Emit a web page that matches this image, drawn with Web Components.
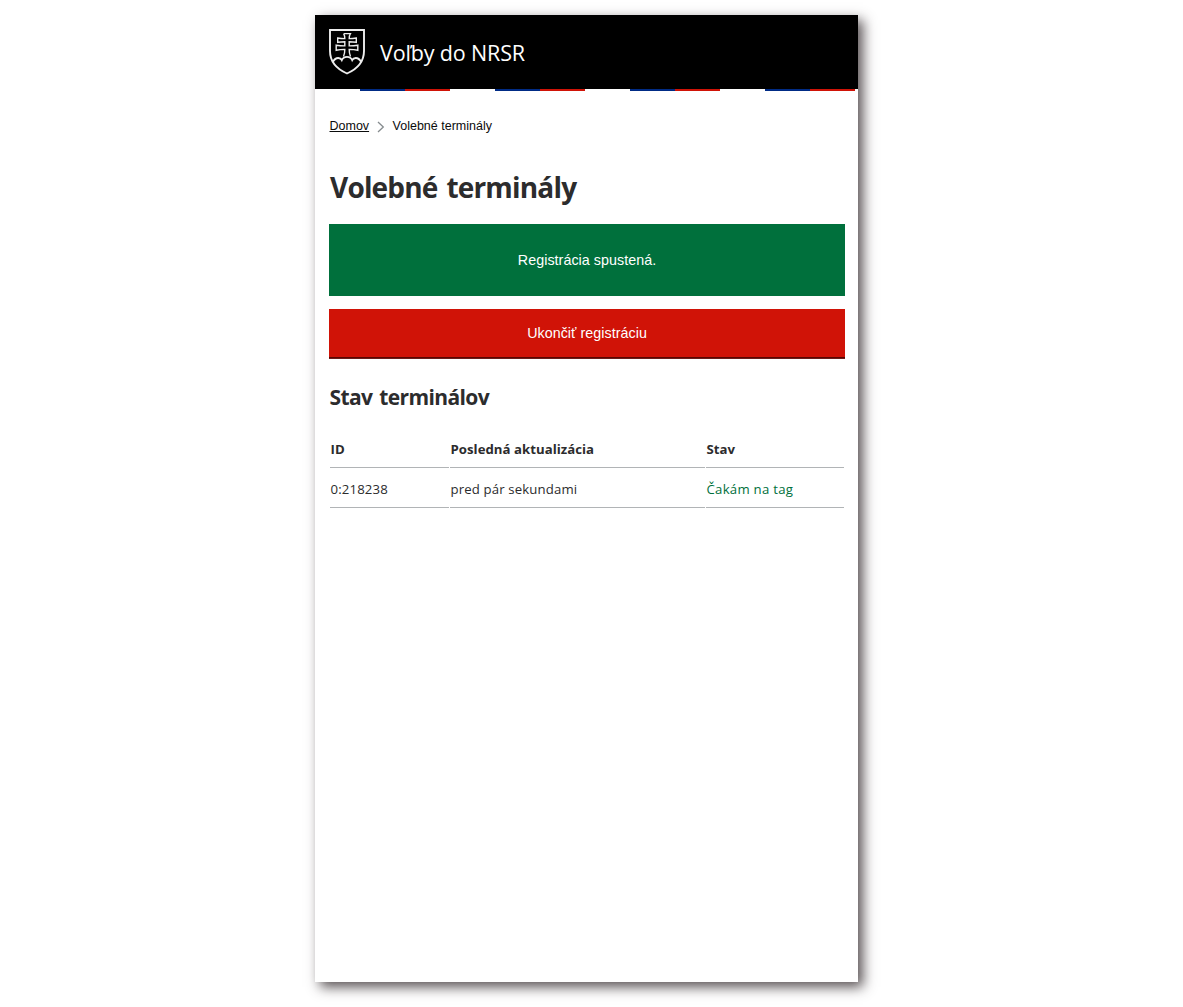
<!DOCTYPE html>
<html lang="sk">
<head>
<meta charset="utf-8">
<title>Voľby do NRSR</title>
<style>
html,body{margin:0;background:#fff}
body{height:1007px;overflow:hidden;font-family:"Open Sans","Noto Sans",sans-serif;color:#2c2c2d}
</style>
</head>
<body>
<app-shell>
  <site-header slot="header">Voľby do NRSR</site-header>
  <bread-crumbs><a slot="home">Domov</a>Volebné terminály</bread-crumbs>
  <page-title>Volebné terminály</page-title>
  <status-banner>Registrácia spustená.</status-banner>
  <action-button>Ukončiť registráciu</action-button>
  <section-title>Stav terminálov</section-title>
  <terminal-table></terminal-table>
</app-shell>
<script>
const define = (name, html) => {
  const template = document.createElement('template');
  template.innerHTML = html;
  customElements.define(name, class extends HTMLElement {
    constructor() {
      super();
      this.attachShadow({mode: 'open'}).append(template.content.cloneNode(true));
    }
  });
};

define('app-shell', `<style>
:host{display:flex;flex-direction:column;box-sizing:border-box;width:543px;height:967px;margin:15px 0 0 315px;background:#fff;box-shadow:5px 5px 12px 0 rgba(46,38,40,.8)}
main{display:flow-root;padding:0 13px 0 14px}
</style><slot name="header"></slot><main><slot></slot></main>`);

define('site-header', `<style>
:host{display:block;color:#fff}
.bar{display:flex;align-items:center;height:74px;padding-left:14px;background:#000;box-sizing:border-box}
svg{display:block;flex:none;margin-top:-1px}
.name{margin-left:15px;font-size:21.5px;line-height:30px;margin-top:1px;white-space:nowrap;letter-spacing:-.15px}
.stripe{height:2px;background:repeating-linear-gradient(90deg,#fff 0 45px,#002b85 45px 90px,#d01307 90px 135px)}
</style>
<div class="bar">
<svg width="36" height="46" viewBox="0 0 36 46" fill="none" stroke="#ededed">
<path stroke-width="1.9" d="M1 1H35V22C35 33.5 27 40.500 18 44.500C9 40.500 1 33.500 1 22Z"/>
<path stroke-width="1.4" d="M14.600 4.600H21.400Q20.200 6.500 20.200 9.600Q24 9.600 27.300 9V13.300Q24 12.700 20.200 12.700V16.900Q25 16.900 28.800 16.200V21.300Q25 20.400 20.200 20.400Q20.200 24.500 21.500 27.600M14.600 4.600Q15.800 6.500 15.800 9.600Q12 9.600 8.700 9V13.300Q12 12.700 15.800 12.700V16.900Q11 16.900 7.200 16.200V21.300Q11 20.400 15.800 20.400Q15.800 24.500 14.500 27.600"/>
<path stroke-width="1.8" d="M3.800 33Q6 29 9.200 29Q11.700 29 12.800 31.200Q14.200 27.800 18 27.800Q21.800 27.800 23.200 31.200Q24.300 29 26.800 29Q30 29 32.200 33"/>
</svg><span class="name"><slot></slot></span></div><div class="stripe"></div>`);

define('bread-crumbs', `<style>
:host{display:flex;align-items:center;height:20px;margin:25px 0 0 .5px;font:12.500px/20px "Liberation Sans",Arial,sans-serif;color:#0b0c0c;white-space:nowrap}
.home{text-decoration:underline;text-underline-offset:1px}
svg{display:block;margin:1px 7.500px 0 8px;flex:none}
</style><span class="home"><slot name="home"></slot></span><svg width="8" height="12" viewBox="0 0 8 12" fill="none" stroke="#858b8e" stroke-width="1.3"><path d="M1 1L6.300 6L1 11"/></svg><span class="here"><slot></slot></span>`);

define('page-title', `<style>
:host{display:block}
h1{margin:31px 0 17px 1px;font-size:28px;line-height:40px;font-weight:700;white-space:nowrap;letter-spacing:-.82px;word-spacing:2.400px}
</style><h1><slot></slot></h1>`);

define('status-banner', `<style>
:host{display:flex;align-items:center;justify-content:center;height:72px;background:#00703c;color:#fff;font:14.300px/20px "Liberation Sans",Arial,sans-serif;letter-spacing:.04px}
</style><span><slot></slot></span>`);

define('action-button', `<style>
:host{display:block;margin-top:13px}
button{display:block;width:100%;height:50px;margin:0;padding:0 0 2px;border:0;background:#d01307;box-shadow:inset 0 -1px #6e1b19,inset 0 -2px #5a0500;color:#fff;font:14.300px/20px "Liberation Sans",Arial,sans-serif;letter-spacing:.04px}
</style><button><slot></slot></button>`);

define('section-title', `<style>
:host{display:block}
h2{margin:23px 0 17px .5px;font-size:21px;line-height:30px;font-weight:700;white-space:nowrap;letter-spacing:-.6px;word-spacing:1.900px}
</style><h2><slot></slot></h2>`);

define('terminal-table', `<style>
:host{display:block;margin-left:1px}
.row{display:grid;grid-template-columns:119px 255px 138px;column-gap:1px;font-size:13.200px;line-height:20px;white-space:nowrap}
.row>*{box-sizing:border-box;height:39px;min-width:0;padding:10px 0 0 .5px;border-bottom:1px solid #b1b4b6}
.row+.row{margin-top:1px;letter-spacing:.14px}
.head{font-weight:700;letter-spacing:.03px}
.row>.ok{color:#00703c;letter-spacing:.26px}
</style>
<div class="row head"><span>ID</span><span>Posledná aktualizácia</span><span>Stav</span></div>
<div class="row"><span>0:218238</span><span>pred pár sekundami</span><span class="ok">Čakám na tag</span></div>`);
</script>
</body>
</html>
